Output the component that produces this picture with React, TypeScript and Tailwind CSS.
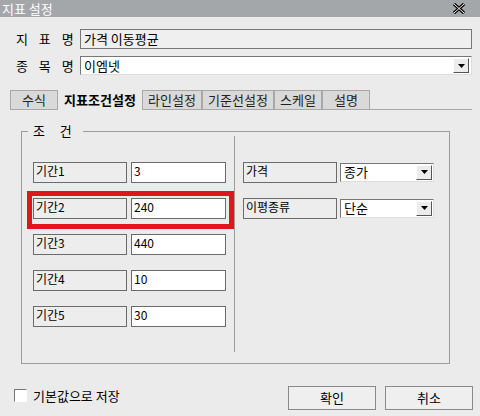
import React from 'react';

const font = { fontFamily: '"Noto Sans CJK KR", "Noto Sans", sans-serif' };

function DropBtn() {
  return (
    <div className="flex h-[15px] w-[16px] items-center justify-center border border-t-white border-l-white border-r-[#555] border-b-[#555] bg-[#ececec]">
      <svg width="7" height="4" viewBox="0 0 7 4">
        <path d="M0 0h7L3.5 4z" fill="#000" />
      </svg>
    </div>
  );
}

function LabelBox({ text }: { text: string }) {
  return (
    <div className="flex h-[21px] w-[94px] items-start border border-[#6b6b6b] bg-[#ededed] px-[2px] text-[12px] leading-[16px] text-black">
      {text}
    </div>
  );
}

export default function App() {
  const periods = [
    { label: '기간1', value: '3' },
    { label: '기간2', value: '240' },
    { label: '기간3', value: '440' },
    { label: '기간4', value: '10' },
    { label: '기간5', value: '30' },
  ];
  const tabs = [
    { label: '수식', w: 'w-[48px]' },
    { label: '지표조건설정', w: 'w-[84px]', active: true },
    { label: '라인설정', w: 'w-[60px]' },
    { label: '기준선설정', w: 'w-[72px]' },
    { label: '스케일', w: 'w-[48px]' },
    { label: '설명', w: 'w-[48px]' },
  ];

  return (
    <div className="h-[416px] w-[480px] overflow-hidden bg-[#ebebeb] text-black" style={font}>
      {/* title bar */}
      <div className="flex h-[17px] items-center justify-between bg-[#a4a7aa] pl-[2px] pr-[15px]">
        <span className="text-[13px] leading-[15px] text-white">지표 설정</span>
        <svg width="12" height="11" viewBox="0 0 12 11">
          <path d="M1 1l10 9M11 1L1 10" stroke="#000" strokeWidth="3.2" />
          <path d="M1 1l10 9M11 1L1 10" stroke="#fff" strokeWidth="1" />
        </svg>
      </div>

      {/* 지표명 */}
      <div className="mt-[12px] flex items-center pl-[16px]">
        <span className="w-[64px] text-[13px] tracking-[4px]">지 표 명</span>
        <div className="h-[20px] w-[392px] border border-[#777] bg-[#efefef] px-[3px] text-[13px] leading-[17px]">
          가격 이동평균
        </div>
      </div>

      {/* 종목명 */}
      <div className="mt-[7px] flex items-center pl-[16px]">
        <span className="w-[64px] text-[13px] tracking-[4px]">종 목 명</span>
        <div className="flex h-[19px] w-[392px] items-center justify-between border border-t-[#777] border-l-[#777] border-r-[#ddd] border-b-[#ddd] bg-white pl-[3px] pr-[2px] text-[13px] leading-[17px]">
          <span>이엠넷</span>
          <DropBtn />
        </div>
      </div>

      {/* tabs */}
      <div className="mt-[14px] flex h-[20px] pl-[10px]">
        {tabs.map((t) =>
          t.active ? (
            <div key={t.label} className={`${t.w} flex items-center justify-center text-[13px] font-bold`}>
              {t.label}
            </div>
          ) : (
            <div
              key={t.label}
              className={`${t.w} flex items-center justify-center border border-[#a8a8a8] bg-[#d9d9d9] text-[13px] text-[#222]`}
            >
              {t.label}
            </div>
          )
        )}
        <div className="w-[102px] border-b border-[#a8a8a8]" />
      </div>

      {/* group box */}
      <div className="relative ml-[21px] mt-[21px] h-[233px] w-[429px] border border-[#9c9c9c]">
        <span className="absolute left-[6px] top-[-9px] bg-[#ebebeb] px-[5px] text-[13px] leading-[16px] tracking-[6px]">
          조 건
        </span>
        <div className="flex pt-[30px]">
          <div className="flex flex-col gap-[15px] pl-[11px]">
            {periods.map((p) => (
              <div key={p.label} className="flex gap-[4px]">
                <LabelBox text={p.label} />
                <div className="h-[21px] w-[95px] border border-[#6b6b6b] bg-white px-[2px] text-[12px] leading-[16px]">
                  {p.value}
                </div>
              </div>
            ))}
          </div>
          <div className="ml-[8px] mt-[-26px] h-[216px] w-px bg-[#9c9c9c]" />
          <div className="flex flex-col gap-[15px] pl-[8px]">
            {[
              { label: '가격', value: '종가' },
              { label: '이평종류', value: '단순' },
            ].map((r) => (
              <div key={r.label} className="flex gap-[3px]">
                <LabelBox text={r.label} />
                <div className="mt-[1px] flex h-[19px] w-[94px] items-center justify-between border border-t-[#777] border-l-[#777] border-r-[#ddd] border-b-[#ddd] bg-white pl-[3px] pr-[1px] text-[13px]">
                  <span>{r.value}</span>
                  <DropBtn />
                </div>
              </div>
            ))}
          </div>
        </div>
        {/* highlight */}
        <div className="absolute left-[5px] top-[59px] h-[38px] w-[207px] border-[5px] border-[#e0161e]" />
      </div>

      {/* footer */}
      <div className="mt-[22px] flex items-start justify-between pl-[14px] pr-[7px]">
        <div className="mt-[3px] flex items-center gap-[6px]">
          <div className="h-[13px] w-[13px] border border-t-[#777] border-l-[#777] border-r-white border-b-white bg-white" />
          <span className="text-[13px] leading-[14px]">기본값으로 저장</span>
        </div>
        <div className="flex gap-[9px]">
          {['확인', '취소'].map((b) => (
            <div
              key={b}
              className="flex h-[24px] w-[88px] items-center justify-center border border-[#8a8a8a] bg-[#efefef] text-[13px]"
            >
              {b}
            </div>
          ))}
        </div>
      </div>
    </div>
  );
}
